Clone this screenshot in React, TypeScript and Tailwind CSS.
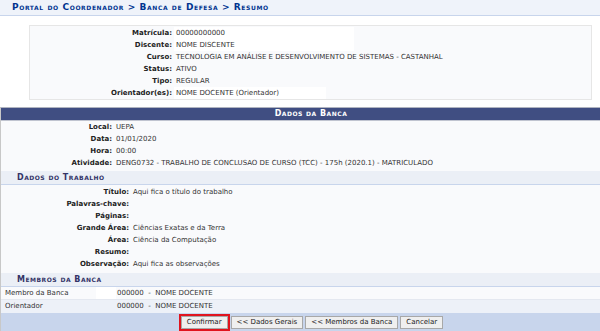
const sc = "[font-variant:small-caps]";

function InfoRow({ label, value, labelW, white }: { label: string; value: string; labelW: string; white?: string }) {
  return (
    <div className="flex h-[12px] items-center">
      <div className={`${labelW} shrink-0 text-right font-bold text-[#222]`}>{label}</div>
      <div className={`ml-[2px] pl-[2px] h-full flex items-center ${white ?? ""}`}>{value}</div>
    </div>
  );
}

function SubHeader({ title }: { title: string }) {
  return (
    <div className={`h-[14px] flex items-center pl-[16px] bg-[#ebeff6] border-b border-[#c8d5ec] font-bold text-[#333366] text-[8px] tracking-[0.5px] ${sc}`}>
      {title}
    </div>
  );
}

function Btn({ children }: { children: React.ReactNode }) {
  return (
    <button className="h-[13px] px-[5px] bg-[#efefef] border border-[#a8a8a8] text-[7px] text-[#222] leading-none">
      {children}
    </button>
  );
}

export default function App() {
  return (
    <div className="w-[600px] h-[331px] overflow-hidden bg-white text-[7px] text-[#333] font-['DejaVu_Sans',Verdana,sans-serif]">
      <div className="h-[16px] bg-[#eff3fa] border-b border-[#c8d5ec] flex items-center pl-[12px]">
        <span className={`font-bold text-[#003390] text-[9px] tracking-[0.6px] ${sc}`}>
          Portal do Coordenador &gt; Banca de Defesa &gt; Resumo
        </span>
      </div>

      <div className="ml-[29px] mr-[8px] mt-[9px] bg-[#f9fafc] border border-[#e6e6e6] pt-[1px]">
        <InfoRow label="Matrícula:" value="00000000000" labelW="w-[142px]" white="bg-white w-[180px]" />
        <InfoRow label="Discente:" value="NOME DISCENTE" labelW="w-[142px]" white="bg-white w-[180px]" />
        <InfoRow label="Curso:" value="TECNOLOGIA EM ANÁLISE E DESENVOLVIMENTO DE SISTEMAS - CASTANHAL" labelW="w-[142px]" />
        <InfoRow label="Status:" value="ATIVO" labelW="w-[142px]" />
        <InfoRow label="Tipo:" value="REGULAR" labelW="w-[142px]" />
        <InfoRow label="Orientador(es):" value="NOME DOCENTE (Orientador)" labelW="w-[142px]" white="bg-white w-[152px]" />
      </div>

      <div className="w-[621px] mt-[7px] border-t border-[#b0b4c0] border-l border-l-[#c8c8c8]">
        <div className={`h-[13px] bg-[#404e82] border-b border-[#c0c4d0] flex items-center justify-center font-bold text-white text-[8px] tracking-[0.5px] ${sc}`}>
          Dados da Banca
        </div>
        <div className="bg-[#f9fafc] pb-[2px]">
          <InfoRow label="Local:" value="UEPA" labelW="w-[111px]" />
          <InfoRow label="Data:" value="01/01/2020" labelW="w-[111px]" />
          <InfoRow label="Hora:" value="00:00" labelW="w-[111px]" />
          <InfoRow label="Atividade:" value="DENG0732 - TRABALHO DE CONCLUSAO DE CURSO (TCC) - 175h (2020.1) - MATRICULADO" labelW="w-[111px]" />
        </div>
        <SubHeader title="Dados do Trabalho" />
        <div className="bg-[#f9fafc] pt-[1px] pb-[3px]">
          <InfoRow label="Título:" value="Aqui fica o título do trabalho" labelW="w-[128px]" />
          <InfoRow label="Palavras-chave:" value="" labelW="w-[128px]" />
          <InfoRow label="Páginas:" value="" labelW="w-[128px]" />
          <InfoRow label="Grande Área:" value="Ciências Exatas e da Terra" labelW="w-[128px]" />
          <InfoRow label="Área:" value="Ciência da Computação" labelW="w-[128px]" />
          <InfoRow label="Resumo:" value="" labelW="w-[128px]" />
          <InfoRow label="Observação:" value="Aqui fica as observações" labelW="w-[128px]" />
        </div>
        <SubHeader title="Membros da Banca" />
        <div className="flex h-[13px] items-center bg-[#f9fafc] border-b border-[#e4e8f0]">
          <div className="w-[95px] pl-[4px]">Membro da Banca</div>
          <div className="w-[20px] h-full bg-white" />
          <div className="pl-[1px]">000000&nbsp; - &nbsp;NOME DOCENTE</div>
        </div>
        <div className="flex h-[13px] items-center bg-[#edf1f8]">
          <div className="w-[115px] pl-[4px]">Orientador</div>
          <div className="pl-[1px]">000000&nbsp; - &nbsp;NOME DOCENTE</div>
        </div>
        <div className="h-[18px] bg-[#c8d5ec] flex items-center justify-center gap-[2px]">
          <div className="border-2 border-[#e0141e] mr-[-1px] flex">
            <Btn>Confirmar</Btn>
          </div>
          <Btn>&lt;&lt; Dados Gerais</Btn>
          <Btn>&lt;&lt; Membros da Banca</Btn>
          <Btn>Cancelar</Btn>
        </div>
      </div>
    </div>
  );
}
